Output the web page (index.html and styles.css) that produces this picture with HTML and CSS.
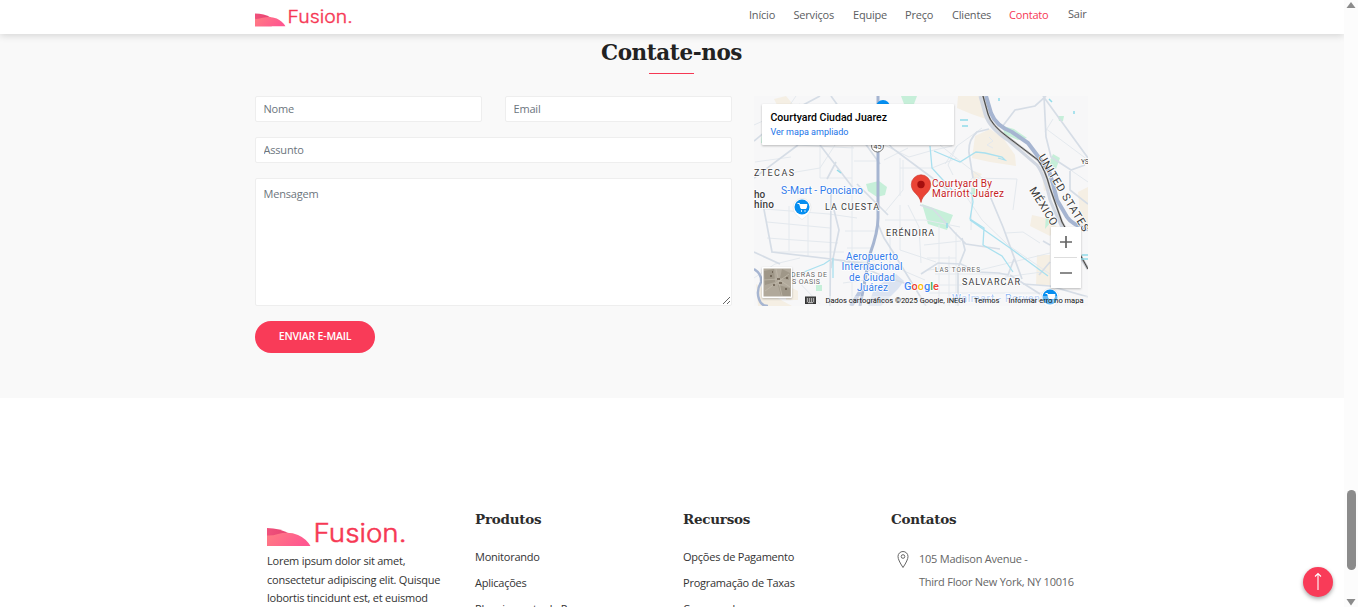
FILE: index.html
```html
<!DOCTYPE html>
<html lang="pt-BR">
<head>
<meta charset="utf-8">
<title>Fusion - Contato</title>
<link rel="stylesheet" href="styles.css">
</head>
<body>
<svg width="0" height="0" class="defs">
  <defs>
    <linearGradient id="hill" x1="0" x2="1" y1="0" y2=".3"><stop offset="0" stop-color="#ff7d83"/><stop offset="1" stop-color="#ff5790"/></linearGradient>
    <linearGradient id="back" x1="0" x2="1"><stop offset="0" stop-color="#f0527c"/><stop offset="1" stop-color="#e5406f"/></linearGradient>
    <symbol id="logo" viewBox="0 0 140 30">
      <path d="M0 8Q13 8 23 14L24 26H0Z" fill="url(#back)"/>
      <path d="M0 15.500Q5 16 11 14Q22 11 31 15Q39 18.500 43.500 26H0Z" fill="url(#hill)"/>
      <text x="46.500" y="22" textLength="93" lengthAdjust="spacingAndGlyphs" class="wordmark">Fusion.</text>
    </symbol>
  </defs>
</svg>
<div class="viewport">
<div class="page">
  <header class="topbar">
    <svg class="logo-small" viewBox="0 0 140 30"><use href="#logo"/></svg>
    <nav class="nav">
      <a>Início</a><a>Serviços</a><a>Equipe</a><a>Preço</a><a>Clientes</a><a class="active">Contato</a><a class="exit">Sair</a>
    </nav>
  </header>
  <section class="contact">
    <h2>Contate-nos</h2>
    <div class="rule"></div>
    <div class="contact-grid">
      <form class="form">
        <input class="field" placeholder="Nome">
        <input class="field" placeholder="Email">
        <input class="field wide" placeholder="Assunto">
        <textarea class="field wide message" placeholder="Mensagem"></textarea>
        <button type="button" class="send"><span>ENVIAR E-MAIL</span></button>
      </form>
      <svg class="map" viewBox="754 96 334 210">
        <rect x="754" y="96" width="334" height="210" fill="#f7f7f8"/>
        <g fill="#f5efe4">
          <path d="M958 96H981L986 119Q970 114 957 108Z"/>
          <path d="M975 136L990 129L1003 138L1015 155L1016 166L990 162L972 158Z"/>
          <path d="M1032 215L1050 219L1057 227L1050 236L1030 226Z"/>
          <path d="M1037 255H1050V285H1036Z"/><path d="M1042 174L1052 188L1044 191Z"/>
          <path d="M1078 192L1088 187V232L1081 226Z"/>
          <path d="M774 99L786 96L796 108L779 109Z"/>
          <path d="M756 284L781 300L792 306H758Z"/>
          <path d="M786 285L798 291V300H786Z"/><path d="M971 170L982 174L974 183Z"/>
        </g>
        <g fill="#c6efd9">
          <path d="M901 96H917L914 104H904Z"/><path d="M866 184L879 181L887 187L885 195L877 197L868 191Z"/>
          <path d="M1003 126L1014 129L1027 138L1018 140L1004 134Z"/><path d="M1053 154L1060 158L1056 169L1049 163Z"/>
          <path d="M922 204L939 210L953 215L947 230L928 224Z"/><path d="M816 285H822V291H816Z"/>
          <path d="M1058 116L1064 116L1063 121L1059 121Z"/><path d="M762 133H765V143H761Z"/>
          <path d="M971 188H975V195H971Z"/><path d="M1046 215L1051 222L1045 229Z"/>
        </g>
        <path d="M882 283L896 274L904 281L898 289L881 306H868L874 289Z" fill="#dbe3f1"/>
        <g fill="none" stroke="#e4e9ee" stroke-width="1">
          <path d="M754 125L783 112L800 104M820 145V178H852M835 145L820 168L784 174M852 146V306M854 161H878M878 142L909 157L930 151L952 146M884 160L908 148M900 158V196M900 168H932L957 158M885 212L903 190V160M755 162L791 157M785 112L796 96M796 145L854 148"/>
          <path d="M765 209L829 214L857 218M767 222L830 228M767 238L838 243M771 252H844M789 206V251M808 207V257M845 231H876M847 248H872M841 262L888 260M843 283L880 278M787 270L820 304M754 278L775 264L800 258"/>
          <path d="M885 220H925L960 227M890 232V265L925 280M900 205V250L936 262M908 205L919 227L921 263M924 245L961 241M927 258H956M928 270L955 267M939 225V306M949 256V306M956 232V306M935 274H1010M926 285H1015M929 293H1046M964 193L982 220L1008 245L1050 274"/>
          <path d="M964 190L972 178L1017 179L1013 210M972 185L971 230M1006 233L1023 232L1040 243M980 270L1050 253M1005 277L1042 272M1045 128L1088 160M1053 119L1045 132M1072 171L1088 182"/>
          <path d="M940 145L965 165L982 178M945 164L957 146L982 128M957 146L948 165L953 175M989 137L993 141L987 145L993 148"/>
        </g>
        <g fill="none" stroke="#d6dde6" stroke-width="1.700">
          <path d="M754 141L788 113L820 96M820 145L857 193M831 96L880 164M836 162L827 179M878 131L892 148L931 177L952 193M754 178L798 145"/>
          <path d="M831 193L830 306M834 210L839 230L831 268M762 199L772 252L831 259L878 265"/>
          <path d="M754 252L780 264M831 259L854 263L878 274L910 285M878 224L884 238L893 252L926 306"/>
          <path d="M990 196L1003 227L1022 279M920 205L933 209L955 233L966 244L1000 249M962 238L965 250L958 268V306M921 274L938 263L961 264L978 272L999 273L1008 275L1014 259M1010 275L1040 294"/>
          <path d="M989 129L977 132Q968 140 969 153L973 178M1002 127L1015 110L1035 106L1046 96M1043 96L1051 107L1088 158M1044 96L1046 137L1051 157L1071 170L1085 165"/>
          <path d="M1039 275L1050 262M1043 241L1050 245M1023 284L1050 286L1088 297M1070 171V190L1088 204M857 184L888 215"/>
        </g>
        <path d="M930 146L932 168L952 190M934 151L960 162L976 152L985 153L1002 157L1005 160L998 158M965 190L972 194L973 202L970 219L984 228L983 245L1002 256L1013 272M970 220L1010 248L1048 276M794 276L824 264L830 260M833 258V278" fill="none" stroke="#a9e0ef" stroke-width="1.300"/>
        <path d="M878 96V218Q878 232 870 254L860 306" fill="none" stroke="#a6b5d1" stroke-width="3"/>
        <path d="M754 269Q762 274 761 282Q756 291 759 299Q761 306 768 306" fill="none" stroke="#a6b5d1" stroke-width="2.500"/>
        <path d="M851 306L865 284" stroke="#b8c5de" stroke-width="4"/>
        <path d="M980 96L985 114Q989 128 1009 141L1037 165Q1044 174 1050 200L1063 230L1088 269" fill="none" stroke="#d1d7e1" stroke-width="3"/>
        <path d="M986 96L991 113Q996 126 1012 132L1028 143L1049 171Q1054 186 1057 200L1067 217Q1072 225 1088 229" fill="none" stroke="#a6b5d1" stroke-width="4"/>
        <path d="M983 96L988 114Q991 125 1009 138L1038 160Q1045 169 1050 188L1062 222L1088 269" fill="none" stroke="#b0b0b0" stroke-width="2.200"/>
        <path d="M983 96L988 114Q991 125 1009 138L1038 160Q1045 169 1050 188L1062 222L1088 269" fill="none" stroke="#444" stroke-width="1"/>
        <path d="M999 98v3M1049 99l3 3M1074 111v3M960 120h8M962 126h6M837 170l4 3M838 140l3-2M1082 255h6M1080 259h8M947 223v5" stroke="#91dce9" stroke-width="1.500"/>
        <circle cx="883" cy="107" r="7" fill="#058ef0"/>
        <circle cx="877.500" cy="146" r="6" fill="#fff" stroke="#777"/>
        <text x="873.500" y="149" font-size="7" fill="#444">45</text>
        <g class="halo">
          <g fill="#3c3c3c" font-size="9">
            <text x="754" y="175.500" textLength="40">ZTECAS</text>
            <text x="754" y="198" font-size="10" font-weight="500">ho</text><text x="754" y="208" font-size="10" font-weight="500" textLength="20">hino</text>
            <text x="825" y="209.500" textLength="54">LA CUESTA</text><text x="886" y="236" textLength="48">ERÉNDIRA</text>
            <text x="962" y="284.500" textLength="58">SALVARCAR</text>
            <text x="935" y="272" font-size="6.500" fill="#666" textLength="45">LAS TORRES</text>
            <text x="791" y="277" font-size="7" fill="#666" textLength="36">DERAS DE</text><text x="792" y="284" font-size="7" fill="#666" textLength="28">S OASIS</text>
            <text x="1081" y="164" font-size="7" textLength="8">YS</text>
            <text transform="translate(1038 157) rotate(59)" font-size="11" textLength="88">UNITED STATES</text>
            <text transform="translate(1029 190) rotate(58)" font-size="11" textLength="43">MÉXICO</text>
          </g>
          <g fill="#327bea" font-size="10">
            <text x="781" y="194" textLength="82" lengthAdjust="spacingAndGlyphs">S-Mart - Ponciano</text>
            <text x="846" y="260" textLength="52">Aeropuerto</text><text x="841.500" y="270" textLength="61">Internacional</text><text x="849" y="280.500" textLength="46">de Ciudad</text><text x="857" y="291" textLength="31">Juárez</text>
            <text x="952" y="302" fill="#8fb6f4" textLength="95">Walmart - Porvenir</text>
          </g>
          <g fill="#c5221f" font-size="10"><text x="932" y="187" textLength="60">Courtyard By</text><text x="932" y="197" textLength="72">Marriott Juárez</text></g>
          <text x="904" y="290" font-size="11" font-weight="500" textLength="35"><tspan fill="#4285f4">G</tspan><tspan fill="#ea4335">o</tspan><tspan fill="#fbbc05">o</tspan><tspan fill="#4285f4">g</tspan><tspan fill="#34a853">l</tspan><tspan fill="#ea4335">e</tspan></text>
        </g>
        <g id="shop"><path d="M793 207.500a9 9 0 1 1 18 0q0 6-9 12q-9-6-9-12Z" fill="#fff" stroke="#ddd" stroke-width=".5"/><circle cx="802" cy="207" r="7.500" fill="#058ef0"/><path d="M797.500 203.500h2l1.500 5h5l1-4h-7" fill="#fff" stroke="#fff"/><path d="M801 211h1M804.500 211h1" stroke="#fff" stroke-width="1.500"/></g>
        <use href="#shop" x="248" y="90"/>
        <path d="M921 202.500C919.500 194 911.300 193 911.300 184.500a9.700 9.700 0 0 1 19.400 0C930.700 193 922.500 194 921 202.500Z" fill="#ea4335" stroke="#c9362c" stroke-width=".6"/><circle cx="921" cy="184.500" r="3.700" fill="#a50e0e"/>
        <rect class="raised" x="762" y="104" width="192" height="41" rx="1" fill="#fff"/>
        <text x="770.500" y="121" font-size="11" font-weight="500" textLength="116.500" lengthAdjust="spacingAndGlyphs">Courtyard Ciudad Juarez</text><text x="770.500" y="135" font-size="9" fill="#1a73e8" textLength="78" lengthAdjust="spacingAndGlyphs">Ver mapa ampliado</text>
        <rect class="raised" x="1051" y="227" width="30" height="61" fill="#fff"/>
        <path d="M1054 257.500h23" stroke="#ddd"/><path d="M1060 242h12M1066 236v12M1060 273h12" stroke="#666" stroke-width="1.700"/>
        <rect class="raised" x="762" y="267" width="30" height="31" rx="1" fill="#fff"/><rect x="763.500" y="268.500" width="27.500" height="28" fill="#b1a99b"/>
        <path d="M764 271l10-2 1 13-10 3zM782 269l8 4-1 7-9-2zM778 285l12 3v8h-9z" fill="#9f9788"/><path d="M765 291l24-17M776 269l6 27M764 280l14-1 12 8" stroke="#c3bbad" stroke-width=".7" fill="none"/><path d="M770 276h2M777 279h3M773 285h2M779 283h3M785 289h2M772 272h1M786 278h2" stroke="#65594b" stroke-width="1.500"/>
        <rect x="800" y="296" width="288" height="10" fill="#f7f7f7" opacity=".4"/>
        <rect x="805.500" y="297" width="10" height="6.500" fill="#555" stroke="#333"/><path d="M807 299h8M807 301h8" stroke="#fff" stroke-dasharray="1 1"/><path d="M808 302.700h5" stroke="#fff" stroke-width=".7"/>
        <g font-size="8" fill="#111"><text x="825.500" y="303" textLength="140" lengthAdjust="spacingAndGlyphs">Dados cartográficos ©2025 Google, INEGI</text><text x="974" y="303" textLength="25.500" lengthAdjust="spacingAndGlyphs">Termos</text><text x="1008.500" y="303" textLength="75" lengthAdjust="spacingAndGlyphs">Informar erro no mapa</text></g>
      </svg>
    </div>
  </section>
  <footer class="footer">
    <div class="about"><svg class="logo-large" viewBox="0 0 140 30"><use href="#logo"/></svg><p>Lorem ipsum dolor sit amet,<br>consectetur adipiscing elit. Quisque<br>lobortis tincidunt est, et euismod</p></div>
    <div class="links"><h3>Produtos</h3><a>Monitorando</a><a>Aplicações</a><a>Planejamento de Preços</a></div>
    <div class="links"><h3>Recursos</h3><a>Opções de Pagamento</a><a>Programação de Taxas</a><a>Comparado</a></div>
    <div class="links"><h3>Contatos</h3><div class="address"><svg width="12" height="18" viewBox="0 0 12 18" fill="none" stroke="#666"><path d="M6 16.500Q1 9 1 5.500a5 5 0 0 1 10 0Q11 9 6 16.500Z"/><circle cx="6" cy="5.500" r="1.800"/></svg><p>105 Madison Avenue -<br>Third Floor New York, NY 10016</p></div></div>
  </footer>
</div>
<aside class="scrollbar"><svg width="14" height="607" fill="#8b8b8b"><path d="M2.500 8L7 2L11.500 8Z"/><rect x="3" y="490" width="9" height="80" rx="4.500"/><path d="M2.500 599H11.500L7 605.500Z"/></svg></aside>
<div class="to-top"><svg width="30" height="30" fill="none" stroke="#fff" stroke-width="1.100"><path d="M15 23V7M12 9.500L15 6.500L18 9.500"/></svg></div>
</div>
</body>
</html>
```
FILE: styles.css
```css
* { box-sizing: border-box; }
body { margin: 0; font-family: "Open Sans", sans-serif; font-size: 11px; overflow: hidden; background: #fff; }
.defs { position: absolute; }
.viewport { display: flex; height: 607px; overflow: hidden; position: relative; }
.page { width: 1344px; height: 607px; overflow: hidden; }
.scrollbar { width: 14px; background: #fcfcfc; }
.scrollbar svg { display: block; }
.topbar { height: 34px; background: #fff; box-shadow: 0 2px 7px rgba(0,0,0,.14); position: relative; display: flex; justify-content: space-between; padding: 6px 257px 0 255px; }
.logo-small { width: 98px; height: 21px; margin-top: 1.500px; }
.wordmark { font: 300 25px Inter, sans-serif; fill: #f63854; stroke: #f63854; stroke-width: .5px; }
.nav { display: grid; grid-template-columns: 44.500px 59.500px 52px 47px 57px 59px 19px; color: #5b5d61; line-height: 18px; letter-spacing: -.2px; white-space: nowrap; width: 338px; }
.nav .active { color: #f63854; }
.nav .exit { margin-top: -1px; }
.contact { height: 364px; background: #f9f9f9; padding: 4px 256px 0 255px; }
h2 { margin: 0; text-align: center; font: bold 21.500px/30px "DejaVu Serif", serif; letter-spacing: -.4px; color: #222; }
.rule { width: 45px; height: 1px; margin: 5px auto 22px 394px; background: #f63854; }
.contact-grid { display: grid; grid-template-columns: 477px 334px; gap: 22px; }
.form { display: grid; grid-template-columns: 227px 227px; column-gap: 23px; row-gap: 15px; align-content: start; }
.field { width: 100%; height: 26px; border: 1px solid #eee; border-radius: 2px; background: #fff; padding: 0 7.500px 2px; font: 11px "Open Sans", sans-serif; letter-spacing: -.2px; outline: none; }
.field::placeholder { color: #6c757d; opacity: 1; }
.wide { grid-column: 1 / 3; }
.message { height: 128px; padding-top: 7px; display: block; resize: vertical; }
.send { width: 120px; height: 32px; border: 0; border-radius: 16px; background: #f93b58; color: #fff; font: 600 10.500px "Open Sans", sans-serif; letter-spacing: -.2px; padding: 0 0 2px; }
.map { width: 334px; height: 210px; display: block; font-family: Roboto, sans-serif; }
.halo text { paint-order: stroke; stroke: #fff; stroke-width: 1.500px; stroke-linejoin: round; }
.raised { filter: drop-shadow(0 1px 1px rgba(0,0,0,.25)); }
.footer { height: 209px; padding: 111px 256px 0 267px; display: grid; grid-template-columns: 208px 208px 208px 197px; overflow: hidden; color: #333; letter-spacing: -.24px; }
.about { padding-top: 11px; }
.logo-large { width: 140px; height: 30px; display: block; letter-spacing: 0; }
.about p { margin: 2px 0 0; line-height: 18.500px; white-space: nowrap; }
h3 { margin: 0 0 25px; font: bold 13.500px/20px "DejaVu Serif", serif; letter-spacing: -.25px; color: #2c2c2c; }
.links a { display: block; height: 26px; line-height: 26px; white-space: nowrap; }
.links h3 + a { margin-top: -10px; }
.address { display: flex; gap: 10px; padding: 0 0 0 6px; color: #666; }
.address svg { margin-top: -3px; }
.address p { margin: -7px 0 0; line-height: 23px; white-space: nowrap; }
.to-top { position: absolute; left: 1303px; top: 567px; width: 30px; height: 30px; border-radius: 50%; background: #f93b58; box-shadow: 0 2px 4px rgba(0,0,0,.35); }
.to-top svg { display: block; }
```
